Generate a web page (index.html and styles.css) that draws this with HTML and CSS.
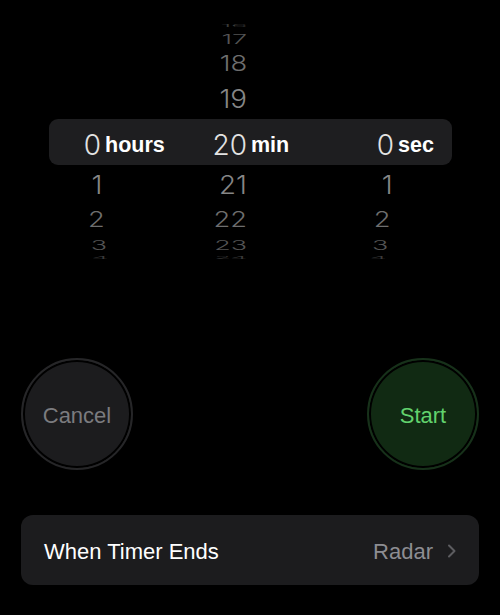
FILE: index.html
```html
<!DOCTYPE html>
<html lang="en">
<head>
<meta charset="utf-8">
<title>Timer</title>
<link rel="stylesheet" href="styles.css">
</head>
<body>
<div class="picker">
  <div class="row d4"><span class="num"></span><span></span><span class="num">16</span><span></span><span class="num"></span><span></span></div>
  <div class="row d3"><span class="num"></span><span></span><span class="num">17</span><span></span><span class="num"></span><span></span></div>
  <div class="row d2"><span class="num"></span><span></span><span class="num">18</span><span></span><span class="num"></span><span></span></div>
  <div class="row d1"><span class="num"></span><span></span><span class="num">19</span><span></span><span class="num"></span><span></span></div>
  <div class="row sel"><span class="num">0</span><span class="lab">hours</span><span class="num">20</span><span class="lab">min</span><span class="num">0</span><span class="lab">sec</span></div>
  <div class="row d1"><span class="num">1</span><span></span><span class="num">21</span><span></span><span class="num">1</span><span></span></div>
  <div class="row d2"><span class="num">2</span><span></span><span class="num">22</span><span></span><span class="num">2</span><span></span></div>
  <div class="row d3"><span class="num">3</span><span></span><span class="num">23</span><span></span><span class="num">3</span><span></span></div>
  <div class="row d4"><span class="num">4</span><span></span><span class="num">24</span><span></span><span class="num">4</span><span></span></div>
</div>
<div class="controls">
  <button class="btn cancel">Cancel</button>
  <button class="btn start">Start</button>
</div>
<div class="card">
  <span class="card-title">When Timer Ends</span>
  <span class="card-value">Radar<svg class="chev" width="10" height="14" viewBox="0 0 10 14"><path d="M2 1.5 L7.5 7 L2 12.5" fill="none" stroke="#5c5c60" stroke-width="2" stroke-linecap="round" stroke-linejoin="round"/></svg></span>
</div>
</body>
</html>
```
FILE: styles.css
```css
html, body {
  margin: 0;
  padding: 0;
  background: #000;
}
body {
  width: 500px;
  height: 615px;
  overflow: hidden;
  font-family: "Liberation Sans", Arial, sans-serif;
  color: #fff;
}
.picker {
  padding: 23px 48px 0 49px;
}
.row {
  display: grid;
  grid-template-columns: 52px 94px 52px 95px 52px 1fr;
  white-space: nowrap;
}
.num {
  font-family: Inter, Roboto, "Liberation Sans", sans-serif;
  font-weight: 300;
  font-size: 28px;
  text-align: right;
}
.lab {
  font-weight: 700;
  font-size: 21.5px;
  padding-left: 4px;
}
.sel {
  height: 46px;
  line-height: 46px;
  background: #1e1e20;
  border-radius: 9px;
}
.sel > span {
  padding-top: 3px;
}
.sel .num {
  color: #e2e2e2;
}
.d1 {
  height: 40px;
  line-height: 40px;
  color: #868686;
  transform: scale(0.99, 0.93);
}
.d2 {
  height: 30px;
  line-height: 30px;
  color: #6e6e6e;
  transform: scale(0.975, 0.745);
}
.d3 {
  height: 20px;
  line-height: 20px;
  color: #545454;
  transform: scale(0.96, 0.476);
}
.d4 {
  height: 6px;
  line-height: 6px;
  color: #3a3a3a;
  transform: scale(0.95, 0.14);
}
.controls {
  display: flex;
  justify-content: space-between;
  padding: 0 21px;
  margin-top: 97px;
}
.btn {
  width: 112px;
  height: 112px;
  box-sizing: border-box;
  border-radius: 50%;
  border: 2px solid;
  box-shadow: inset 0 0 0 2px #000;
  padding: 3px 0 0;
  display: flex;
  align-items: center;
  justify-content: center;
  font-family: "Liberation Sans", Arial, sans-serif;
  font-size: 22px;
}
.cancel {
  background: #1c1c1e;
  border-color: #262628;
  color: #7b7b7f;
}
.start {
  background: #112a13;
  border-color: #17311a;
  color: #62d26d;
}
.card {
  margin: 45px 21px 0;
  height: 70px;
  box-sizing: border-box;
  border-radius: 12px;
  background: #1c1c1e;
  display: flex;
  align-items: center;
  justify-content: space-between;
  padding: 3px 22px 0 23px;
  font-size: 22px;
}
.card-title {
  color: #fff;
}
.card-value {
  display: flex;
  align-items: center;
  color: #8d8d92;
}
.chev {
  margin-left: 14px;
  margin-top: -2px;
}
```
